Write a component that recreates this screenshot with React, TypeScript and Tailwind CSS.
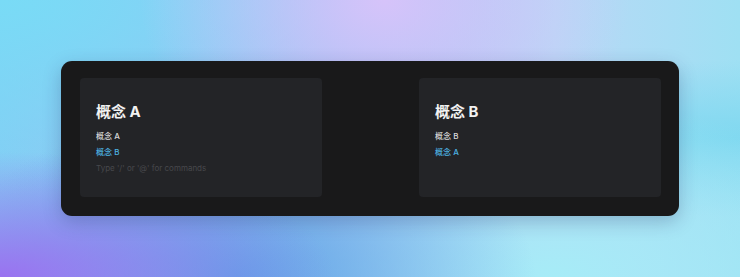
const cards = [
  { title: '概念 A', self: '概念 A', link: '概念 B', placeholder: true },
  { title: '概念 B', self: '概念 B', link: '概念 A', placeholder: false },
];

const font = { fontFamily: 'Inter, "Noto Sans CJK SC", sans-serif' };

const App = () => {
  return (
    <div
      className="w-[740px] h-[277px] flex items-center justify-center overflow-hidden bg-[radial-gradient(ellipse_at_52%_0%,#d6c3fa_0%,transparent_45%),radial-gradient(ellipse_at_0%_100%,#9a72f0_0%,transparent_32%),radial-gradient(ellipse_at_32%_100%,#5ea6e6_0%,transparent_42%),radial-gradient(ellipse_at_0%_0%,#79dbf6_0%,transparent_50%),radial-gradient(ellipse_at_75%_100%,#a6ecf7_0%,transparent_45%),radial-gradient(ellipse_at_100%_50%,#7fd8f0_0%,transparent_40%),linear-gradient(90deg,#84cdf4,#a9b8f2_45%,#b8d8f6_75%,#9fe0f3)]"
      style={font}
    >
      <div className="w-[618px] h-[155px] rounded-[11px] bg-[#19191a] shadow-[0_6px_18px_rgba(30,40,90,0.25)] flex justify-between pl-[19px] pr-[18px] pt-[17px]">
        {cards.map((c) => (
          <div
            key={c.title}
            className="w-[242px] h-[119px] rounded-[4px] bg-[#232427] px-4 pt-[23px]"
          >
            <h1 className="text-[15px] leading-[22px] font-bold text-[#f2f2f2]">
              {c.title}
            </h1>
            <div className="mt-[5px] text-[8px] leading-4 font-medium">
              <p className="text-[#d9d9d9]">{c.self}</p>
              <p className="text-[#4db2e2]">{c.link}</p>
              {c.placeholder && (
                <p className="text-[#47484c] font-normal">Type '/' or '@' for commands</p>
              )}
            </div>
          </div>
        ))}
      </div>
    </div>
  );
};

export default App;
